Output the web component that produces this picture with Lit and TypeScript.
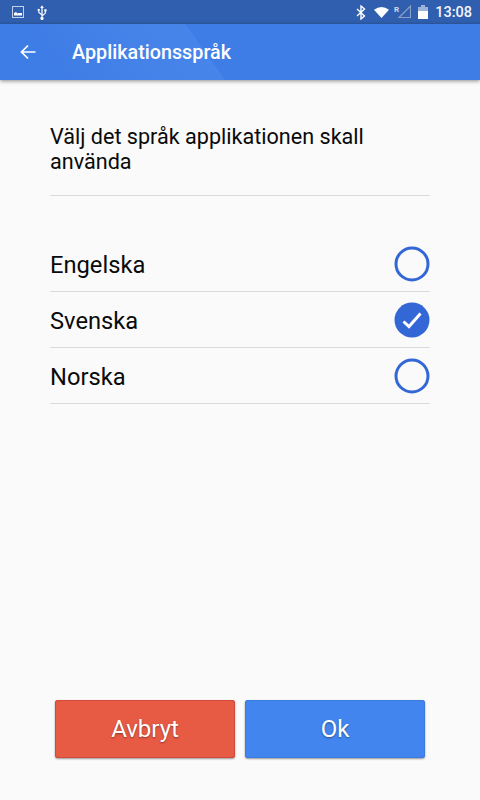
import { LitElement, html, css, svg } from "lit";
import { customElement, state } from "lit/decorators.js";

@customElement("app-root")
export class AppRoot extends LitElement {
  @state() selected = 1;
  static styles = css`
    :host { display: flex; flex-direction: column; width: 480px; height: 800px; background: #fafafa; font-family: Roboto, "Noto Sans", sans-serif; color: #000; overflow: hidden; }
    .status { height: 24px; flex: none; background: #2f5fae; display: flex; align-items: center; color: #fff; box-sizing: border-box; padding: 0 8px 0 12px; }
    .status .left { display: flex; align-items: center; gap: 13px; }
    .status .right { margin-left: auto; display: flex; align-items: center; }
    .status svg { display: block; }
    .time { font-size: 14.5px; font-weight: 500; margin-left: 7px; color: #f4f6fb; }
    .bar { height: 56px; flex: none; background: linear-gradient(54.5deg, #3f7de6 50px, #4885ea 183px, #3f7de6 183.5px); display: flex; align-items: center; color: #fff; box-shadow: 0 1px 4px rgba(0,0,0,.45); position: relative; }
    .back { margin-left: 20px; width: 16px; height: 16px; display: block; }
    .title { margin-left: 36px; font-size: 19.75px; font-weight: 500; }
    .main { flex: 1; display: flex; flex-direction: column; padding: 0 50px; }
    .prompt { margin: 44px 0 0; font-size: 21.6px; line-height: 25px; padding-bottom: 21px; border-bottom: 1px solid #dcdcdc; color: #0a0a0a; }
    .list { margin-top: 40px; }
    .row { height: 55px; border-bottom: 1px solid #dcdcdc; display: flex; align-items: center; justify-content: space-between; font-size: 23.7px; color: #0a0a0a; cursor: pointer; }
    .row span { padding-top: 2px; }
    .row svg { width: 36px; height: 36px; display: block; }
    .buttons { margin-top: auto; margin-bottom: 42px; margin-left: 5px; margin-right: 5px; display: flex; gap: 10px; }
    .btn { flex: 1; height: 58px; border: none; border-radius: 3px; color: #fff; font: 400 24px Roboto, sans-serif; text-shadow: 0 1px 2px rgba(0,0,0,.4); padding: 0; }
    .cancel { background: #e75a44; box-shadow: inset 0 0 0 1px #d24a3a, 0 1px 2px rgba(0,0,0,.4); }
    .ok { background: #4285ef; box-shadow: inset 0 0 0 1px #3d7ade, 0 1px 2px rgba(0,0,0,.4); }
  `;

  radio(on: boolean) {
    return html`<svg viewBox="0 0 36 36">
      ${on
        ? svg`<circle cx="18" cy="18" r="17.5" fill="#3367d6"/><path d="M9.5 19.5l5.5 5L26.5 11.500" fill="none" stroke="#fff" stroke-width="3"/>`
        : svg`<circle cx="18" cy="18" r="16" fill="none" stroke="#3367d6" stroke-width="3"/>`}
    </svg>`;
  }

  render() {
    const langs = ["Engelska", "Svenska", "Norska"];
    return html`
      <div class="status">
        <div class="left">
          <svg width="12" height="12" viewBox="0 0 12 12"><rect x=".5" y=".5" width="11" height="11" fill="none" stroke="#c4d0e6"/><path d="M2 9.500V7l2-1 1.500 1.500 1-.5H10v2.500z" fill="#fff"/></svg>
          <svg width="10" height="15" viewBox="0 0 11 16"><path d="M5.500 0L7.500 3H6.200V10.500L8.500 8.500V7H8V4.500H10.500V7H9.700V9L6.200 12V13A1.700 1.700 0 1 1 4.800 13V11L1.300 8V6.400A1.300 1.300 0 1 1 2.500 6.400V7.500L4.800 9.500V3H3.500z" fill="#fff"/></svg>
        </div>
        <div class="right">
          <svg width="10" height="15" viewBox="0 0 10 15" style="margin-right:8px"><path d="M1 4l7.500 7L5 14V1l3.500 3L1 11" fill="none" stroke="#fff" stroke-width="1.400"/></svg>
          <svg width="15" height="11" viewBox="0 0 15 11"><path d="M0 2.800Q7.500-2.800 15 2.800L7.500 11z" fill="#fff"/></svg>
          <svg width="19" height="17" viewBox="0 0 19 17" style="margin-left:3px"><path d="M18.500 2V13.500H7z" fill="none" stroke="#8a9fc6" stroke-width="1.200"/><text x="2" y="7.500" font-size="8" font-family="Roboto" font-weight="700" fill="#cfd9ec">R</text></svg>
          <svg width="10" height="14" viewBox="0 0 10 14" style="margin-left:7px"><rect x="3" y="0" width="4" height="2" fill="#9db4da"/><rect x="0" y="2" width="10" height="4" fill="#9db4da"/><rect x="0" y="6" width="10" height="8" fill="#fff"/></svg>
          <span class="time">13:08</span>
        </div>
      </div>
      <div class="bar">
        <svg class="back" viewBox="0 0 16 16"><path d="M15.500 8H1.500M8 1.500L1.500 8 8 14.500" fill="none" stroke="#fff" stroke-width="1.700"/></svg>
        <span class="title">Applikationsspråk</span>
      </div>
      <div class="main">
        <p class="prompt">Välj det språk applikationen skall använda</p>
        <div class="list">
          ${langs.map((l, i) => html`<div class="row" @click=${() => (this.selected = i)}><span>${l}</span>${this.radio(i === this.selected)}</div>`)}
        </div>
        <div class="buttons">
          <button class="btn cancel">Avbryt</button>
          <button class="btn ok">Ok</button>
        </div>
      </div>
    `;
  }
}
